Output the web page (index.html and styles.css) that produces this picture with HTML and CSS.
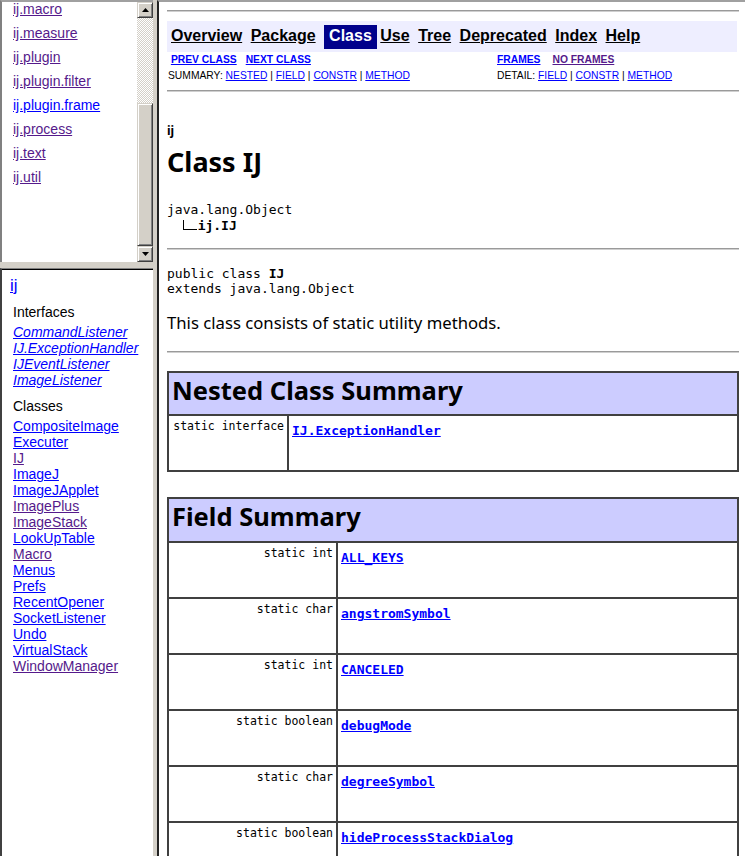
FILE: index.html
```html
<!DOCTYPE HTML>
<html>
<head>
  <meta charset="utf-8">
  <title>IJ (ImageJ API)</title>
  <link rel="stylesheet" href="styles.css">
</head>

<body>
  <div class="frameset">
    <div class="side">
      <div class="frame packages">
        <div class="package-list">
          <a class="visited" href="#">ij.macro</a>
          <a class="visited" href="#">ij.measure</a>
          <a class="visited" href="#">ij.plugin</a>
          <a class="visited" href="#">ij.plugin.filter</a>
          <a href="#">ij.plugin.frame</a>
          <a class="visited" href="#">ij.process</a>
          <a class="visited" href="#">ij.text</a>
          <a class="visited" href="#">ij.util</a>
        </div>
        <div class="scrollbar">
          <div class="sb-button">
            <svg width="7" height="4" viewBox="0 0 7 4"><polygon points="3.5,0 7,4 0,4" fill="#000"/></svg>
          </div>
          <div class="sb-track"></div>
          <div class="sb-thumb"></div>
          <div class="sb-button">
            <svg width="7" height="4" viewBox="0 0 7 4"><polygon points="0,0 7,0 3.5,4" fill="#000"/></svg>
          </div>
        </div>
      </div>

      <div class="frame classes">
        <a class="frame-title" href="#">ij</a>
        <div class="group">
          <div class="group-title">Interfaces</div>
          <a href="#"><i>CommandListener</i></a>
          <a href="#"><i>IJ.ExceptionHandler</i></a>
          <a href="#"><i>IJEventListener</i></a>
          <a href="#"><i>ImageListener</i></a>
        </div>
        <div class="group">
          <div class="group-title">Classes</div>
          <a href="#">CompositeImage</a>
          <a href="#">Executer</a>
          <a class="visited" href="#">IJ</a>
          <a href="#">ImageJ</a>
          <a href="#">ImageJApplet</a>
          <a class="visited" href="#">ImagePlus</a>
          <a class="visited" href="#">ImageStack</a>
          <a href="#">LookUpTable</a>
          <a class="visited" href="#">Macro</a>
          <a href="#">Menus</a>
          <a href="#">Prefs</a>
          <a href="#">RecentOpener</a>
          <a href="#">SocketListener</a>
          <a href="#">Undo</a>
          <a href="#">VirtualStack</a>
          <a class="visited" href="#">WindowManager</a>
        </div>
      </div>
    </div>

    <div class="frame main">
      <hr class="rule rule--top">

      <div class="navbar">
        <span class="nav-item"><a href="#">Overview</a></span>
        <span class="nav-item"><a href="#">Package</a></span>
        <span class="nav-item nav-item--current">Class</span>
        <span class="nav-item"><a href="#">Use</a></span>
        <span class="nav-item"><a href="#">Tree</a></span>
        <span class="nav-item"><a href="#">Deprecated</a></span>
        <span class="nav-item"><a href="#">Index</a></span>
        <span class="nav-item"><a href="#">Help</a></span>
      </div>

      <div class="subnav">
        <div class="subnav-cell">&nbsp;<a class="strong" href="#">PREV CLASS</a><a class="strong spaced" href="#">NEXT CLASS</a></div>
        <div class="subnav-cell"><a class="strong" href="#">FRAMES</a><a class="strong spaced-wide visited" href="#">NO FRAMES</a></div>
        <div class="subnav-cell">SUMMARY:&nbsp;<a href="#">NESTED</a>&nbsp;|&nbsp;<a href="#">FIELD</a>&nbsp;|&nbsp;<a href="#">CONSTR</a>&nbsp;|&nbsp;<a href="#">METHOD</a></div>
        <div class="subnav-cell">DETAIL:&nbsp;<a href="#">FIELD</a>&nbsp;|&nbsp;<a href="#">CONSTR</a>&nbsp;|&nbsp;<a href="#">METHOD</a></div>
      </div>

      <hr class="rule rule--nav">

      <div class="pkg-label">ij</div>
      <h2 class="class-title">Class IJ</h2>

      <div class="code tree">
        <div class="code-line">java.lang.Object</div>
        <div class="code-line tree-sub"><span class="tree-corner"></span><b>ij.IJ</b></div>
      </div>

      <hr class="rule rule--tree">

      <div class="code decl">
        <div class="code-line">public class <b>IJ</b></div>
        <div class="code-line">extends java.lang.Object</div>
      </div>

      <p class="desc">This class consists of static utility methods.</p>

      <hr class="rule rule--desc">

      <table class="summary nested">
        <tr><th colspan="2">Nested Class Summary</th></tr>
        <tr>
          <td class="type">static interface</td>
          <td class="member"><a href="#">IJ.ExceptionHandler</a><br>&nbsp;</td>
        </tr>
      </table>

      <table class="summary fields">
        <tr><th colspan="2">Field Summary</th></tr>
        <tr>
          <td class="type">static int</td>
          <td class="member"><a href="#">ALL_KEYS</a><br>&nbsp;</td>
        </tr>
        <tr>
          <td class="type">static char</td>
          <td class="member"><a href="#">angstromSymbol</a><br>&nbsp;</td>
        </tr>
        <tr>
          <td class="type">static int</td>
          <td class="member"><a href="#">CANCELED</a><br>&nbsp;</td>
        </tr>
        <tr>
          <td class="type">static boolean</td>
          <td class="member"><a href="#">debugMode</a><br>&nbsp;</td>
        </tr>
        <tr>
          <td class="type">static char</td>
          <td class="member"><a href="#">degreeSymbol</a><br>&nbsp;</td>
        </tr>
        <tr>
          <td class="type">static boolean</td>
          <td class="member"><a href="#">hideProcessStackDialog</a><br>&nbsp;</td>
        </tr>
      </table>
    </div>
  </div>
</body>
</html>
```

FILE: styles.css
```css
body {
  margin: 0;
  background-color: #d4d0c8;
  color: black;
  font-family: "Noto Sans", sans-serif;
}

a {
  color: #0000ff;
}

a.visited {
  color: #551a8b;
}

/* frameset */

.frameset {
  display: flex;
  height: 856px;
  overflow: hidden;
}

.side {
  display: flex;
  flex-direction: column;
  gap: 6px;
  width: 153px;
  margin-right: 4px;
}

.frame {
  box-sizing: border-box;
  background-color: white;
  overflow: hidden;
}

.packages {
  display: flex;
  height: 262px;
  border-top: 2px solid #a0a0a0;
  border-left: 2px solid #808080;
}

.package-list {
  flex: 1;
  padding-left: 11px;
  font-family: "Liberation Sans", Arial, sans-serif;
  font-size: 14px;
  line-height: 24px;
}

.package-list a {
  display: block;
  width: fit-content;
}

.package-list a:first-child {
  margin-top: -5px;
}

/* win classic scrollbar */

.scrollbar {
  display: flex;
  flex-direction: column;
  width: 16px;
}

.sb-button,
.sb-thumb {
  box-sizing: border-box;
  border: 1px solid;
  border-color: #d4d0c8 #404040 #404040 #d4d0c8;
  background-color: #d4d0c8;
  box-shadow: inset 1px 1px #fff, inset -1px -1px #808080;
}

.sb-button {
  display: flex;
  align-items: center;
  justify-content: center;
  height: 16px;
}

.sb-track {
  height: 85px;
  background: repeating-conic-gradient(#fff 0 25%, #d4d0c8 0 50%) 0 0 / 2px 2px;
}

.sb-thumb {
  height: 143px;
}

/* class list frame */

.classes {
  flex: 1;
  padding: 8px 0 0 8px;
  border-top: 1px solid #808080;
  border-left: 2px solid #404040;
  box-shadow: inset 0 1px #000;
  font-family: "Liberation Sans", Arial, sans-serif;
  font-size: 14px;
}

.frame-title {
  display: block;
  width: fit-content;
  font-size: 17px;
  line-height: 17px;
}

.group {
  margin-top: 7px;
  padding-left: 3px;
  line-height: 16px;
}

.group-title {
  line-height: 23px;
}

.group a {
  display: block;
  width: fit-content;
}

/* main frame */

.main {
  flex: 1;
  padding: 0 6px 0 8px;
  border-top: 2px solid #a0a0a0;
  border-left: 2px solid #222;
}

.rule {
  height: 0;
  margin: 0;
  border: 0;
  border-top: 1px solid #9a9a9a;
  border-bottom: 1px solid #cfcfcf;
}

.rule--top { margin-top: 8px; }
.rule--nav { margin-top: 6px; }
.rule--tree { margin-top: 14px; }
.rule--desc { margin-top: 17px; }

.navbar {
  display: flex;
  gap: 3.5px;
  margin: 9px 2px 0 0;
  padding: 4px 0 3px 4px;
  background-color: #eeeeff;
  font-family: "Liberation Sans", Arial, sans-serif;
  font-size: 16px;
  font-weight: bold;
}

.nav-item {
  padding: 1px 5px 3px 0;
  line-height: 20px;
}

.nav-item a {
  color: black;
}

.nav-item--current {
  padding-left: 5px;
  background-color: #00008b;
  color: white;
}

.subnav {
  display: grid;
  grid-template-columns: 329px 1fr;
  font-family: "Liberation Sans", Arial, sans-serif;
  font-size: 10.3px;
  line-height: 16px;
  white-space: nowrap;
}

.subnav-cell {
  padding-left: 1px;
}

.strong {
  font-weight: bold;
}

.spaced {
  margin-left: 9px;
}

.spaced-wide {
  margin-left: 12px;
}

.pkg-label {
  margin-top: 32px;
  font-size: 12px;
  font-weight: bold;
  line-height: 14px;
}

.class-title {
  margin: 8px 0 0;
  font-size: 27px;
  line-height: 32px;
}

.code {
  font-family: "DejaVu Sans Mono", monospace;
  font-size: 13px;
}

.code-line {
  white-space: pre;
}

.tree {
  margin-top: 24px;
  line-height: 16px;
}

.tree-sub {
  padding-left: 2ch;
}

.tree-corner {
  display: inline-block;
  box-sizing: border-box;
  width: 14px;
  height: 10px;
  margin-right: 1px;
  border-left: 1px solid #000;
  border-bottom: 1px solid #000;
}

.decl {
  margin-top: 16px;
  line-height: 15px;
}

.desc {
  margin: 15px 0 0;
  font-size: 16.7px;
  line-height: 23px;
}

/* summary tables */

.summary {
  width: 100%;
  border: 1px solid #404040;
  border-spacing: 0;
}

.summary th,
.summary td {
  border: 1px solid #404040;
}

.summary th {
  padding: 1px 3px 7px;
  background-color: #ccccff;
  font-size: 25.5px;
  line-height: 33px;
  text-align: left;
}

.nested {
  margin-top: 18px;
}

.fields {
  margin-top: 25px;
}

.fields th {
  padding-bottom: 8px;
}

.type {
  width: 112px;
  padding: 3px;
  font-family: "DejaVu Sans Mono", monospace;
  font-size: 11.5px;
  text-align: right;
  vertical-align: top;
  white-space: nowrap;
}

.fields .type {
  width: 161px;
}

.member {
  padding: 1px 3px 5px;
  font-size: 16.7px;
  line-height: 24px;
  vertical-align: top;
}

.member a {
  font-family: "DejaVu Sans Mono", monospace;
  font-size: 13px;
  font-weight: bold;
  line-height: 14px;
}
```
